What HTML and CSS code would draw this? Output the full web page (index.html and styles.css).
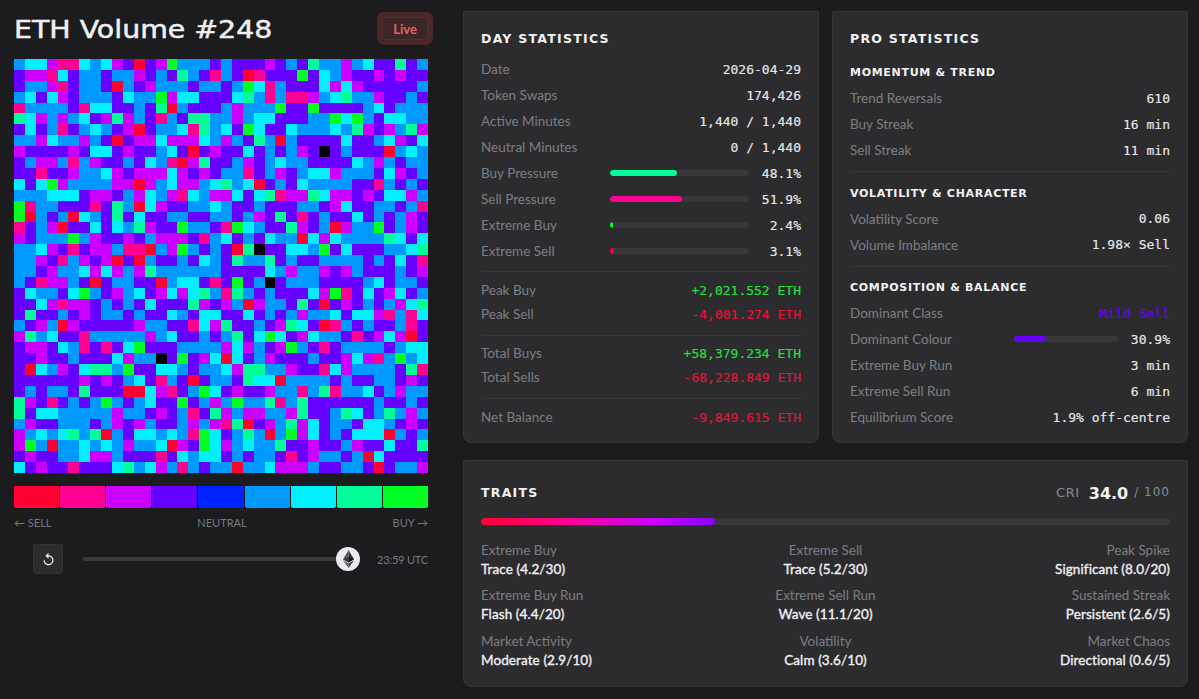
FILE: index.html
```html
<!DOCTYPE html>
<html lang="en">
<head>
<meta charset="utf-8">
<title>ETH Volume #248</title>
<link rel="stylesheet" href="styles.css">
</head>
<body>
<main class="page">
  <section class="left">
    <header class="title-row">
      <h1 class="title">ETH Volume #248</h1>
      <span class="live">Live</span>
    </header>
    <div class="heatmap" id="heatmap"></div>
    <div class="legend">
      <span class="sw c-r"></span><span class="sw c-p"></span><span class="sw c-m"></span><span class="sw c-v"></span><span class="sw c-b"></span><span class="sw c-a"></span><span class="sw c-c"></span><span class="sw c-g"></span><span class="sw c-G"></span>
    </div>
    <div class="legend-labels"><span>← SELL</span><span>NEUTRAL</span><span>BUY →</span></div>
    <div class="player">
      <button class="reset" aria-label="Replay">
        <svg viewBox="0 0 24 24" width="15" height="15"><path fill="#e8e8ea" d="M12 5V1L7 6l5 5V7c3.31 0 6 2.69 6 6s-2.69 6-6 6-6-2.69-6-6H4c0 4.42 3.58 8 8 8s8-3.58 8-8-3.58-8-8-8z"/></svg>
      </button>
      <div class="track">
        <span class="thumb">
          <svg viewBox="0 0 256 417" width="11" height="18">
            <polygon fill="#343434" points="127.96,0 125.17,9.5 125.17,285.17 127.96,287.96 255.92,212.32"/>
            <polygon fill="#5e5e5e" points="127.96,0 0,212.32 127.96,287.96 127.96,154.16"/>
            <polygon fill="#3c3c3b" points="127.96,312.19 126.39,314.1 126.39,412.3 127.96,416.9 256,236.59"/>
            <polygon fill="#5e5e5e" points="127.96,416.9 127.96,312.19 0,236.59"/>
            <polygon fill="#141414" points="127.96,287.95 255.92,212.32 127.96,154.16"/>
            <polygon fill="#393939" points="0,212.32 127.96,287.95 127.96,154.16"/>
          </svg>
        </span>
      </div>
      <span class="time">23:59 UTC</span>
    </div>
  </section>

  <section class="right">
    <div class="stats">
      <article class="panel">
        <h2 class="panel-title day-title">DAY STATISTICS</h2>
        <div class="row"><span class="lbl">Date</span><span class="val">2026-04-29</span></div>
        <div class="row"><span class="lbl">Token Swaps</span><span class="val">174,426</span></div>
        <div class="row"><span class="lbl">Active Minutes</span><span class="val">1,440 / 1,440</span></div>
        <div class="row"><span class="lbl">Neutral Minutes</span><span class="val">0 / 1,440</span></div>
        <div class="row"><span class="lbl day-lbl">Buy Pressure</span><span class="bar"><i class="fill c-g" style="width:48.1%"></i></span><span class="val pct">48.1%</span></div>
        <div class="row"><span class="lbl day-lbl">Sell Pressure</span><span class="bar"><i class="fill c-p" style="width:51.9%"></i></span><span class="val pct">51.9%</span></div>
        <div class="row"><span class="lbl day-lbl">Extreme Buy</span><span class="bar"><i class="fill c-G" style="width:2.4%"></i></span><span class="val pct">2.4%</span></div>
        <div class="row"><span class="lbl day-lbl">Extreme Sell</span><span class="bar"><i class="fill c-r" style="width:3.1%"></i></span><span class="val pct">3.1%</span></div>
        <hr class="rule first">
        <div class="row tight"><span class="lbl">Peak Buy</span><span class="val up">+2,021.552 ETH</span></div>
        <div class="row tight"><span class="lbl">Peak Sell</span><span class="val down">-4,001.274 ETH</span></div>
        <hr class="rule">
        <div class="row tight"><span class="lbl">Total Buys</span><span class="val up">+58,379.234 ETH</span></div>
        <div class="row tight"><span class="lbl">Total Sells</span><span class="val down">-68,228.849 ETH</span></div>
        <hr class="rule last">
        <div class="row tight"><span class="lbl">Net Balance</span><span class="val down">-9,849.615 ETH</span></div>
      </article>

      <article class="panel">
        <h2 class="panel-title pro-title">PRO STATISTICS</h2>
        <h3 class="sub">MOMENTUM &amp; TREND</h3>
        <div class="row"><span class="lbl">Trend Reversals</span><span class="val">610</span></div>
        <div class="row"><span class="lbl">Buy Streak</span><span class="val">16 min</span></div>
        <div class="row"><span class="lbl">Sell Streak</span><span class="val">11 min</span></div>
        <hr class="rule pro-rule">
        <h3 class="sub">VOLATILITY &amp; CHARACTER</h3>
        <div class="row"><span class="lbl">Volatility Score</span><span class="val">0.06</span></div>
        <div class="row"><span class="lbl">Volume Imbalance</span><span class="val">1.98× Sell</span></div>
        <hr class="rule pro-rule">
        <h3 class="sub">COMPOSITION &amp; BALANCE</h3>
        <div class="row"><span class="lbl">Dominant Class</span><span class="val mild">Mild Sell</span></div>
        <div class="row"><span class="lbl pro-lbl">Dominant Colour</span><span class="bar"><i class="fill c-v" style="width:30.9%"></i></span><span class="val pct">30.9%</span></div>
        <div class="row"><span class="lbl">Extreme Buy Run</span><span class="val">3 min</span></div>
        <div class="row"><span class="lbl">Extreme Sell Run</span><span class="val">6 min</span></div>
        <div class="row"><span class="lbl">Equilibrium Score</span><span class="val">1.9% off-centre</span></div>
      </article>
    </div>

    <article class="panel traits">
      <div class="traits-head">
        <h2 class="panel-title">TRAITS</h2>
        <div class="cri"><span class="cri-lbl">CRI</span><strong class="cri-num">34.0</strong><span class="cri-max">/ 100</span></div>
      </div>
      <div class="bar cri-bar"><i class="fill gradient" style="width:34%"></i></div>
      <div class="trait-grid">
        <div class="trait"><span class="t-lbl">Extreme Buy</span><span class="t-val">Trace (4.2/30)</span></div>
        <div class="trait"><span class="t-lbl">Extreme Sell</span><span class="t-val">Trace (5.2/30)</span></div>
        <div class="trait"><span class="t-lbl">Peak Spike</span><span class="t-val">Significant (8.0/20)</span></div>
        <div class="trait"><span class="t-lbl">Extreme Buy Run</span><span class="t-val">Flash (4.4/20)</span></div>
        <div class="trait"><span class="t-lbl">Extreme Sell Run</span><span class="t-val">Wave (11.1/20)</span></div>
        <div class="trait"><span class="t-lbl">Sustained Streak</span><span class="t-val">Persistent (2.6/5)</span></div>
        <div class="trait"><span class="t-lbl">Market Activity</span><span class="t-val">Moderate (2.9/10)</span></div>
        <div class="trait"><span class="t-lbl">Volatility</span><span class="t-val">Calm (3.6/10)</span></div>
        <div class="trait"><span class="t-lbl">Market Chaos</span><span class="t-val">Directional (0.6/5)</span></div>
      </div>
    </article>
  </section>
</main>
<script src="heatmap.js"></script>
</body>
</html>
```

FILE: styles.css
```css
* { box-sizing: border-box; }
html, body { margin: 0; height: 100%; overflow: hidden; }
body {
  background: #1c1c1e;
  color: #e8e8ea;
  font-family: Lato, "Noto Sans", sans-serif;
  font-size: 13.5px;
}
.page {
  display: grid;
  grid-template-columns: 414px 725px;
  column-gap: 35px;
  padding: 11px 11px 0 14px;
}

/* left column */
.title-row {
  height: 48px;
  display: flex;
  align-items: center;
  justify-content: space-between;
  padding-bottom: 13px;
}
.title {
  margin: 2px 0 0;
  font-family: "DejaVu Sans", sans-serif;
  font-weight: 400;
  font-size: 24px;
  color: #f0f0f4;
  -webkit-text-stroke: 0.5px #f0f0f4;
  transform: scaleX(1.183);
  transform-origin: left center;
}
.live {
  width: 46px;
  height: 23px;
  display: flex;
  align-items: center;
  justify-content: center;
  background: #3c2627;
  border: 1px solid #552f2f;
  border-radius: 2px 2px 3px 3px;
  box-shadow: 0 0 0 5px #4a2829;
  color: #e8605c;
  font-size: 13px;
  font-weight: 700;
  clip-path: inset(-5px -5px -6px -5px round 0 0 8px 8px);
}
.heatmap {
  width: 414px;
  height: 414px;
  display: grid;
  grid-template-columns: repeat(38, 1fr);
  grid-template-rows: repeat(38, 1fr);
}
.c-r { background: #ff0033; }
.c-p { background: #ff0090; }
.c-m { background: #cc00ff; }
.c-v { background: #6600ff; }
.c-b { background: #0022ff; }
.c-a { background: #0099ff; }
.c-c { background: #00f0ff; }
.c-g { background: #00ff99; }
.c-G { background: #00ff22; }
.c-k { background: #000; }

.legend {
  margin-top: 13px;
  display: flex;
  gap: 1px;
  height: 22px;
}
.sw { flex: 1; border-radius: 0 0 2px 2px; }
.legend-labels {
  margin-top: 8px;
  display: flex;
  justify-content: space-between;
  font-size: 11px;
  line-height: 14px;
  color: #78787c;
}
.player {
  margin-top: 14px;
  padding-left: 19px;
  display: flex;
  align-items: center;
}
.reset {
  flex: none;
  width: 30px;
  height: 30px;
  padding: 0;
  display: flex;
  align-items: center;
  justify-content: center;
  background: #2c2c2e;
  border: 1px solid #333336;
  border-radius: 0 0 4px 4px;
}
.track {
  flex: none;
  position: relative;
  margin-left: 20px;
  width: 277px;
  height: 4px;
  background: #3a3a3c;
  border-radius: 2px;
}
.thumb {
  position: absolute;
  right: 0;
  top: -10px;
  width: 24px;
  height: 24px;
  border-radius: 50%;
  background: #ececf0;
  display: flex;
  align-items: center;
  justify-content: center;
}
.time {
  margin-left: 17px;
  font-size: 11px;
  letter-spacing: -0.2px;
  color: #78787c;
  white-space: nowrap;
}

/* panels */
.right { display: flex; flex-direction: column; gap: 17px; }
.stats { display: grid; grid-template-columns: 356px 356px; column-gap: 13px; height: 432px; }
.panel {
  background: #2c2c2e;
  border: 1px solid #363638;
  border-radius: 2px 2px 8px 8px;
  padding: 17px 17px 12px;
}
.panel-title {
  margin: 0;
  height: 18px;
  line-height: 20px;
  font-family: "DejaVu Sans", sans-serif;
  font-weight: 700;
  font-size: 12.5px;
  letter-spacing: 1.25px;
  color: #f2f2f4;
}
.day-title { margin-bottom: 9px; }
.pro-title { margin-bottom: 15px; }
.sub {
  margin: 0 0 3px;
  height: 20px;
  line-height: 22px;
  font-family: "DejaVu Sans", sans-serif;
  font-weight: 700;
  font-size: 11px;
  letter-spacing: 0.7px;
  color: #f2f2f4;
}
.row {
  height: 26px;
  display: flex;
  align-items: center;
  justify-content: space-between;
}
.row.tight { height: 24px; }
.lbl { color: #7e7e82; }
.day-lbl { flex: 0 0 129px; }
.pro-lbl { flex: 0 0 164px; }
.val {
  font-family: "DejaVu Sans Mono", monospace;
  font-size: 13px;
  color: #e8e8ea;
  white-space: nowrap;
  -webkit-text-stroke: 0.15px currentColor;
}
.pct { flex: 0 0 52px; text-align: right; }
.up { color: #1fe03f; }
.down { color: #e8103a; }
.mild { color: #6600ff; }
.bar {
  display: block;
  flex: 1;
  height: 6.5px;
  background: #38383a;
  border-radius: 4px;
  overflow: hidden;
}
.fill { display: block; height: 100%; border-radius: 4px; }
.rule { margin: 8.5px 0 5.5px; border: 0; height: 1px; background: #363638; }
.rule.first { margin: 7px 0 6px; }
.rule.last { margin-bottom: 6.5px; }
.rule.pro-rule { margin: 8px 0 10.5px; }

/* traits */
.traits { height: 227px; padding-top: 19px; }
.traits-head {
  height: 24px;
  display: flex;
  align-items: center;
  justify-content: space-between;
}
.cri { display: flex; align-items: center; font-family: "DejaVu Sans", sans-serif; }
.cri-lbl { font-size: 13px; letter-spacing: 0.6px; color: #8a8a8e; margin-right: 9px; }
.cri-num { font-size: 16px; color: #f2f2f4; margin-right: 6px; margin-top: 2px; }
.cri-max { font-size: 12px; letter-spacing: 1px; color: #8a8a8e; }
.cri-bar { margin-top: 14px; flex: none; }
.gradient { background: linear-gradient(90deg, #ff0033, #ff0090 35%, #cc00ff 75%, #8a00ff); }
.trait-grid {
  margin-top: 16px;
  display: grid;
  grid-template-columns: 1fr 1fr 1fr;
  row-gap: 7.5px;
}
.trait { display: flex; flex-direction: column; }
.trait:nth-child(3n+2) { align-items: center; }
.trait:nth-child(3n) { align-items: flex-end; }
.t-lbl { height: 19px; line-height: 19px; color: #7e7e82; }
.t-val {
  height: 19px;
  line-height: 19px;
  letter-spacing: 0.1px;
  color: #f0f0f2;
  -webkit-text-stroke: 0.35px #f0f0f2;
}
```

FILE: heatmap.js
```js
var ROWS = [
"a c c m p p c a c m v r v m G a a a v a v v v m v a v g a a m a c v v g v a",
"v m m p c v a a v a a m v a v g a v p a v r p v v v G v c a m v v m v m v v",
"v a a m p v a a v r a v m a a a v a a v a G c p a v v v c m c m v v v v v a",
"a c v c m v a a a v c a a G m c c v v v c g a p a p p m a c g a a m v v a v",
"p a a a a v p c c v v a v g r a v v v a m a a a G v v G v v v v a c v a a a",
"g c m a m a c v m g m a v p a v g g a a m a c c v v v a a G c G a v c c a a",
"v c v a p v a c a v m r v a a c p g a c v G c v v c a a a c a g m v m a g m",
"a a m c a a m a v r v m m c m m m c a m a v g a r a v v v v c v v a c m v c",
"m v v v v m v c c v m v v a c v r v m v v c v a v a m v k v a v v v r a c a",
"v a m m a p a m v v a v c a p r m g v v a m v a c a a v v v v c a m a v a a",
"v v p v v m a a c m v m m m c m v m v a a p v a m v a c c m a a a v c m v a",
"c v c G m a a a a m m r m a c m m a c g a c r v a v c a a a a v v p a v a v",
"a a a c c c v m m v a m c a m p c a m m c v c g p m m g c m m v m v c c m a",
"G p a a v v v p v g a r c m v v a a c a v v a v v v a a v m c v v a a v a p",
"G r a v a r c a v g v c v v a a v v a a v a m v g v p v a v v c v a v a m v",
"p v a m r v v c v c a g m v v G a a v p G c a v v g m v a r m a a G v a m v",
"m v a a a G a m v v m v a m m m v p a c v a v c a a r c m c a a a a g c v c",
"a a c m v p v m m a p p r a m G a v a v r g k v v c c a G v c v v v a a c g",
"a a m v p a m v m r v r a v v a v c a v g a a g v a v v a a a a v a v c v p",
"a a v m a a c m c m a m g a a a a a a v v v v c a m a a m v m a v v v a v m",
"a v p m m a v r v a a v v r a c c v p v G v a k v a a a v v v v a c v a a v",
"v c a a v c G a v m a c v m c m c g a p g a v a v v v c m G p v c v m c v a",
"v v c m p m m v a v a v c v v v g m v m a r m a a v g v r v m v a v a m c g",
"v g v v a v m v a a v a v v c a v c c v v c v a v a m a a c v c c m p a p c",
"a v m a r m v v v v v m a a v v p c m g v v a v m g c v r p a v a v v a p v",
"m g a c v v p a a a a a m a c v v a v a g v c G c v m c a a v p v m c m r v",
"v m m v c a p v p v c G v v v a a a a m c m a v m G a v p v a a a a v a c c",
"v v m v v a v v v c m a a k v G v m c r c v a m v v v a v v m c m p a G a c",
"v r c a m v c g g a G v v c c a v a a c m g g a a m v v p c m a a a a v g p",
"v v v v v v m v m v a c v p a v r v a a v g c c r a a a a v a v v a a v m v",
"v a v a a v g v v v r r c m p v a G c v m v v m a a p a g p a a c v a m a a",
"g m v p v a v a G a v a c v v G v a m a G a a g p a g v v v v v v a v v a v",
"g v c c a a a a a m a a v m v a p v g m a m m a a m g v v a g c v a g a m a",
"a m v v a a a v a m v m a v v a m a m p g r v m a g m c v a a v c c a v m v",
"m a c a c g a g r a v c c a c a p G c v a g a r a G m c v a v c c c r a v a",
"m G a r a a c a c a m a a c r m v G c m a c a a g v v m v v a m v v c v v g",
"v m v v a a c m m a v v v p v c a c c v a v a a v p v m a a v a r c v v v v",
"c v m v v p v v v c g a c m a p a v a a r a a c m m m a v v a a v r v a a m"
];
var host = document.getElementById("heatmap");
ROWS.forEach(function (row) {
  row.split(" ").forEach(function (key) {
    var cell = document.createElement("span");
    cell.className = "c-" + key;
    host.appendChild(cell);
  });
});
```
